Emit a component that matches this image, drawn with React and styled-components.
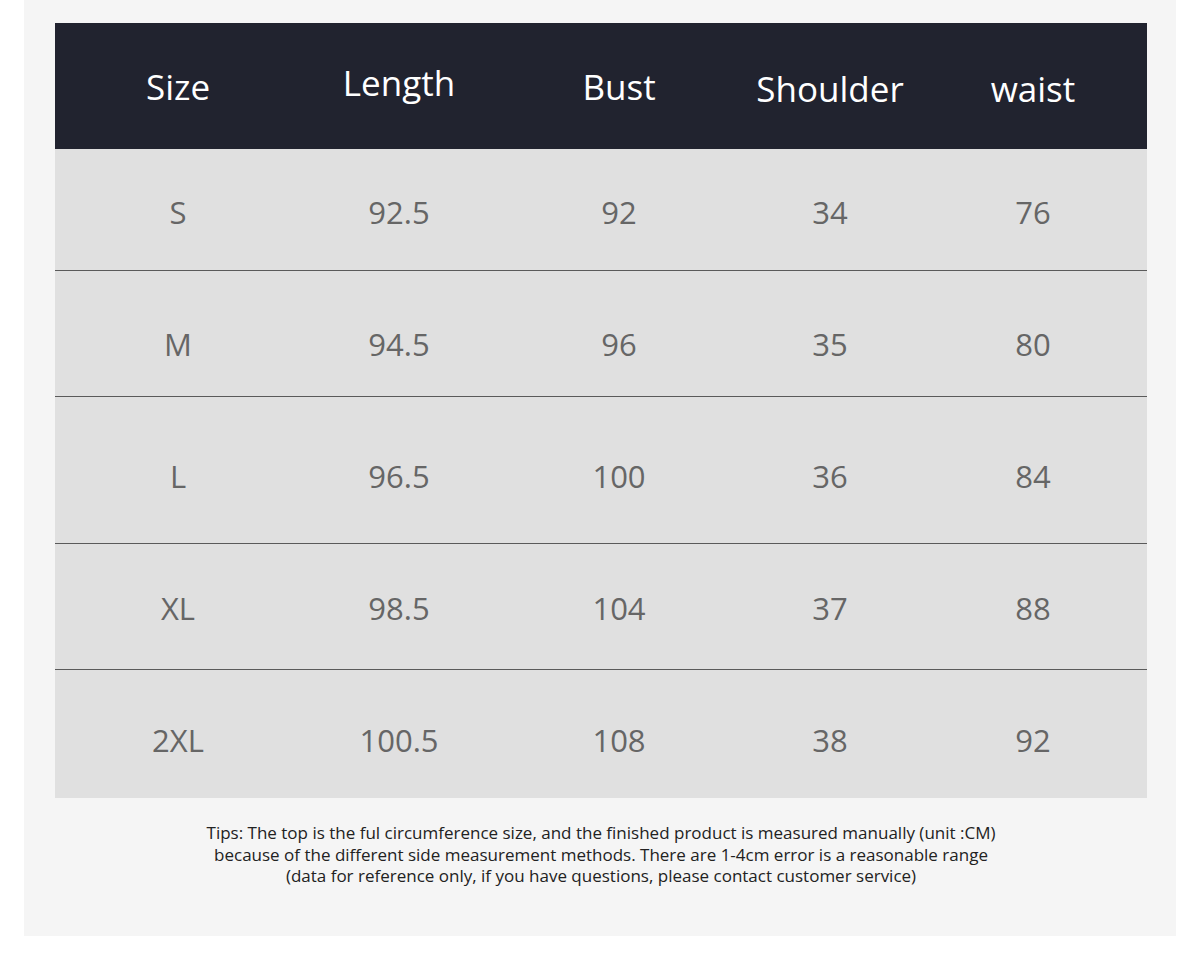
import React from "react";
import styled, { createGlobalStyle } from "styled-components";

const Global = createGlobalStyle`
  html, body { margin: 0; padding: 0; background: #ffffff; }
  body { font-family: "Open Sans", "Noto Sans", sans-serif; }
`;

const Panel = styled.div`
  margin: 0 24px;
  height: 936px;
  box-sizing: border-box;
  background: #f5f5f5;
  padding: 23px 29px 0 31px;
`;

const Table = styled.div`
  display: flex;
  flex-direction: column;
  width: 1092px;
`;

const COLS = "246px 196px 244px 178px 228px";

const HeaderRow = styled.div`
  display: grid;
  grid-template-columns: ${COLS};
  height: 126px;
  align-items: center;
  background: #21232f;
`;

const HeadCell = styled.div`
  text-align: center;
  color: #ffffff;
  font-size: 35px;
  font-weight: 400;
  transform: translateY(${(p) => p.$dy || 0}px);
`;

const Row = styled.div`
  display: grid;
  grid-template-columns: ${COLS};
  box-sizing: border-box;
  height: ${(p) => p.$h}px;
  padding-top: ${(p) => p.$pt}px;
  align-items: center;
  background: #e0e0e0;
  border-top: ${(p) => (p.$first ? "none" : "1px solid #5a5a5a")};
`;

const Cell = styled.div`
  text-align: center;
  color: #666666;
  font-size: 31px;
`;

const Tips = styled.p`
  margin: 24px 0 0;
  width: 1092px;
  text-align: center;
  color: #222222;
  font-size: 17px;
  line-height: 21.5px;
`;

const headers = [
  { t: "Size", dy: 0 },
  { t: "Length", dy: -4 },
  { t: "Bust", dy: 0 },
  { t: "Shoulder", dy: 2 },
  { t: "waist", dy: 2 },
];

const rows = [
  { h: 121, pt: 5, v: ["S", "92.5", "92", "34", "76"] },
  { h: 126, pt: 21, v: ["M", "94.5", "96", "35", "80"] },
  { h: 147, pt: 12, v: ["L", "96.5", "100", "36", "84"] },
  { h: 126, pt: 3, v: ["XL", "98.5", "104", "37", "88"] },
  { h: 129, pt: 12, v: ["2XL", "100.5", "108", "38", "92"] },
];

export default function App() {
  return (
    <>
      <Global />
      <Panel>
        <Table>
          <HeaderRow>
            {headers.map((h) => (
              <HeadCell key={h.t} $dy={h.dy}>{h.t}</HeadCell>
            ))}
          </HeaderRow>
          {rows.map((r, i) => (
            <Row key={i} $h={r.h} $pt={r.pt} $first={i === 0}>
              {r.v.map((c, j) => (
                <Cell key={j}>{c}</Cell>
              ))}
            </Row>
          ))}
        </Table>
        <Tips>
          Tips: The top is the ful circumference size, and the finished product is measured manually (unit :CM)
          <br />
          because of the different side measurement methods. There are 1-4cm error is a reasonable range
          <br />
          (data for reference only, if you have questions, please contact customer service)
        </Tips>
      </Panel>
    </>
  );
}
